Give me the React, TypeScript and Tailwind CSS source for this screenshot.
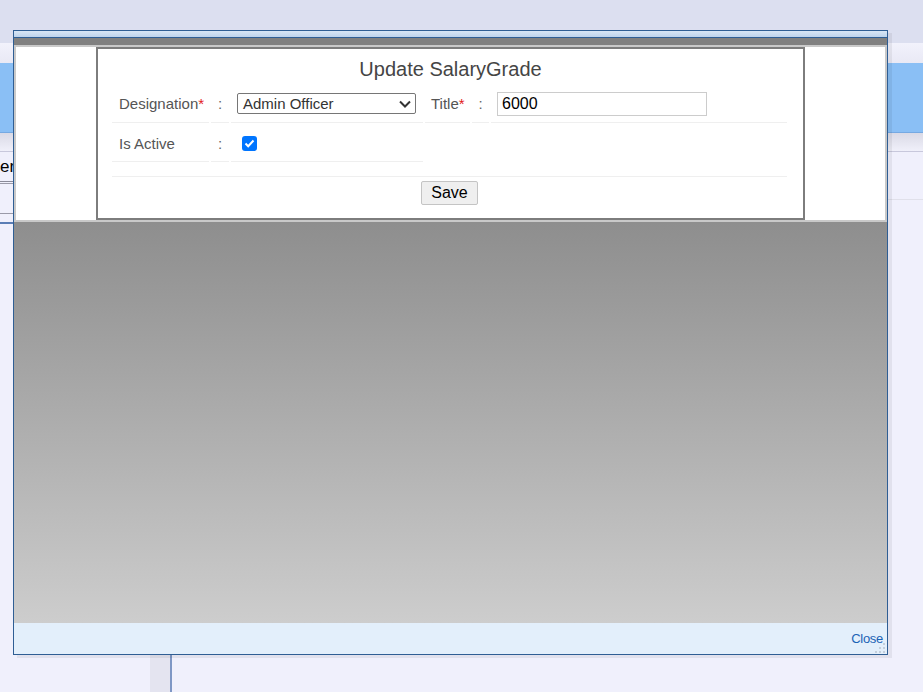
import React from "react";

const font = "font-['Liberation_Sans',Arial,sans-serif]";

function Chevron() {
    return (
        <svg width="12" height="8" viewBox="0 0 12 8" className="shrink-0">
            <path d="M1 1.5 L6 6.5 L11 1.5" fill="none" stroke="#333" strokeWidth="2" />
        </svg>
    );
}

function Grip() {
    return (
        <svg width="12" height="10" viewBox="0 0 12 10" className="absolute right-[2px] bottom-[1px]">
            {[[10, 0], [6, 4], [10, 4], [2, 8], [6, 8], [10, 8]].map(([x, y], i) => (
                <rect key={i} x={x} y={y} width="2" height="2" fill="#c3cfdc" />
            ))}
        </svg>
    );
}

export default function App() {
    const line = "border-b border-[#efefef]";
    const label = "pl-[7px] pt-[2px] text-[15px] text-[#555] whitespace-nowrap";
    const colon = "text-center pt-[2px] text-[15px] text-[#666]";

    return (
        <div className={`relative w-[923px] h-[692px] overflow-hidden bg-[#f0f0fc] flex flex-col ${font}`}>
            {/* page behind the dialog */}
            <div className="h-[43px] shrink-0 bg-[#dcdff0]" />
            <div className="h-[20px] shrink-0 bg-linear-to-b from-[#f2f2fc] to-[#e9e9f5]" />
            <div className="h-[70px] shrink-0 bg-[#8abff5] border-b border-[#76a9e2]" />
            <div className="h-[18px] shrink-0 bg-linear-to-b from-[#dadae6] to-[#f0f0fa]" />
            <div className="flex-1 flex border-t border-[#c8c8dc]">
                <div className="w-[150px] shrink-0 flex flex-col">
                    <div className="h-[30px] border-b border-[#8a8a98] flex items-center">
                        <span className="text-[17px] leading-none text-black">er</span>
                    </div>
                    <div className="h-[31px] border-t border-b border-[#9a9aa8] mt-px" />
                    <div className="h-[10px] border-b-2 border-[#5a7db5]" />
                </div>
                <div className="w-[22px] shrink-0 bg-[#e4e4f0] border-r-2 border-[#7f97c5]" />
                <div className="flex-1">
                    <div className="h-[48px] border-b border-[#e0e0ea]" />
                </div>
            </div>

            {/* dialog */}
            <div className="absolute left-[13px] top-[30px] w-[875px] h-[625px] border border-[#2f5e94] flex flex-col shadow-[4px_3px_0_0_rgba(0,0,0,0.06)]">
                <div className="h-[7px] shrink-0 bg-linear-to-b from-[#d8e6f5] to-[#bdd3ec] border-b border-[#2f5e94]" />
                <div className="h-[7px] shrink-0 bg-[#808080]" />
                <div className="h-[177px] shrink-0 bg-white border-2 border-[#c9c9c9]">
                    <div className="mx-auto w-[709px] h-[173px] border-2 border-[#7d7d7d]">
                        <h2 className="pt-[8px] text-center text-[20px] leading-[24px] text-[#454545]">Update SalaryGrade</h2>
                        <table className="mt-[2px] ml-[12px] w-[679px] table-fixed border-separate border-spacing-[2px]">
                            <tbody>
                                <tr>
                                    <td className={`w-[97px] h-[38px] ${line} ${label}`}>Designation<span className="text-[#e21b1b]">*</span></td>
                                    <td className={`w-[18px] ${line} ${colon}`}>:</td>
                                    <td className={`w-[192px] pl-[6px] ${line}`}>
                                        <div className="w-[179px] h-[21px] border border-[#767676] rounded-[2px] flex items-center justify-between pl-[5px] pr-[4px]">
                                            <span className="text-[15px] text-[#333] leading-none">Admin Officer</span>
                                            <Chevron />
                                        </div>
                                    </td>
                                    <td className={`w-[45px] ${line} pl-[6px] pt-[2px] text-[15px] text-[#555]`}>Title<span className="text-[#e21b1b]">*</span></td>
                                    <td className={`w-[17px] ${line} ${colon}`}>:</td>
                                    <td className={`pl-[6px] ${line}`}>
                                        <input
                                            defaultValue="6000"
                                            className="w-[210px] h-[24px] border border-[#cccccc] px-[4px] text-[16px] text-black outline-none font-['Liberation_Sans',Arial,sans-serif]"
                                        />
                                    </td>
                                </tr>
                                <tr>
                                    <td className={`h-[37px] ${line} ${label}`}>Is Active</td>
                                    <td className={`${line} ${colon}`}>:</td>
                                    <td className={`pl-[11px] ${line}`}>
                                        <span className="w-[15px] h-[15px] rounded-[3px] bg-[#0075ff] flex items-center justify-center">
                                            <svg width="11" height="9" viewBox="0 0 11 9">
                                                <path d="M1.5 4.5 L4.2 7.2 L9.5 1.5" fill="none" stroke="white" strokeWidth="2" />
                                            </svg>
                                        </span>
                                    </td>
                                    <td />
                                    <td />
                                    <td />
                                </tr>
                                <tr>
                                    <td colSpan={6} className={`h-[13px] ${line}`} />
                                </tr>
                                <tr>
                                    <td colSpan={6} className="pt-[2px] text-center">
                                        <button className="h-[24px] px-[9px] bg-[#efefef] border border-[#c4c4c4] rounded-[2px] text-[16px] leading-none text-black">
                                            Save
                                        </button>
                                    </td>
                                </tr>
                            </tbody>
                        </table>
                    </div>
                </div>
                <div className="flex-1 bg-linear-to-b from-[#8e8e8e] to-[#cdcdcd]" />
                <div className="relative h-[31px] shrink-0 bg-[#e3effb] flex items-center justify-end pr-[4px]">
                    <a className="text-[13px] text-[#1c63b5] tracking-[-0.3px]">Close</a>
                    <Grip />
                </div>
            </div>
        </div>
    );
}
